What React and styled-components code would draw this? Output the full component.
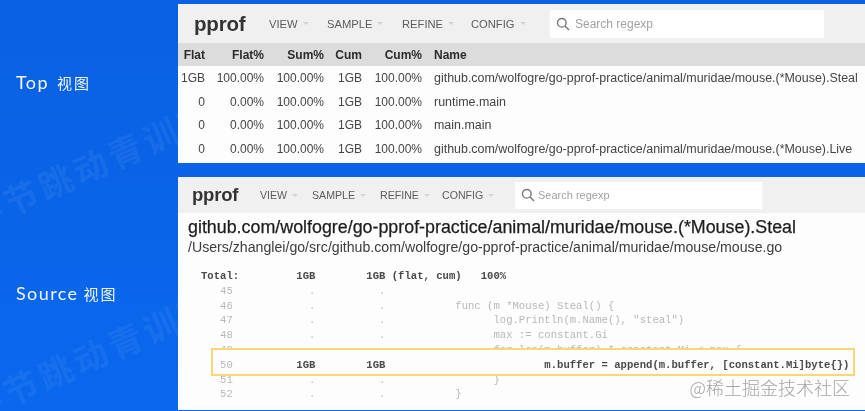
import React from "react";
import styled, { createGlobalStyle } from "styled-components";

const GlobalStyle = createGlobalStyle`
  html, body {
    margin: 0;
    padding: 0;
    background: #0a63e6;
  }
`;

const Page = styled.div`
  position: relative;
  width: 865px;
  height: 411px;
  overflow: hidden;
  display: grid;
  grid-template-columns: 178px 687px;
  background: linear-gradient(180deg, #0a60e2 0%, #0a68ee 100%);
  font-family: "Liberation Sans", Arial, sans-serif;
  filter: blur(0.35px);
`;

const Side = styled.div`
  display: flex;
  flex-direction: column;
  padding-left: 16px;
`;

const SideLabel = styled.div`
  font-family: "Lato", "Noto Sans CJK SC", sans-serif;
  font-size: 18px;
  letter-spacing: 1.4px;
  color: #f2f7ff;
  line-height: 22px;
  margin-top: ${({ $top }) => $top}px;
  span {
    font-family: "Noto Sans CJK SC", sans-serif;
    font-size: 15px;
    letter-spacing: 2px;
    margin-left: ${({ $gap }) => $gap}px;
  }
`;

const Main = styled.div`
  position: relative;
  display: flex;
  flex-direction: column;
  padding-top: 4px;
  gap: 14px;
`;

const Panel = styled.div`
  background: #fdfdfd;
  height: ${({ $height }) => $height}px;
`;

const Nav = styled.div`
  display: flex;
  align-items: center;
  height: ${({ $height }) => $height}px;
  padding-left: ${({ $pad }) => $pad}px;
  background: #f0f0f0;
  color: #5c5c5c;
  font-size: ${({ $size }) => $size}px;
`;

const Logo = styled.div`
  font-size: ${({ $size }) => $size}px;
  font-weight: 700;
  color: #333;
  letter-spacing: -0.2px;
  width: ${({ $width }) => $width}px;
`;

const Menu = styled.div`
  display: flex;
  align-items: center;
  gap: 5px;
  width: ${({ $width }) => $width}px;
`;

const Caret = styled.i`
  width: 0;
  height: 0;
  border-left: 3.5px solid transparent;
  border-right: 3.5px solid transparent;
  border-top: 3.5px solid #d4d4d4;
`;

const Search = styled.div`
  display: flex;
  align-items: center;
  gap: ${({ $gap }) => $gap}px;
  width: ${({ $width }) => $width}px;
  height: ${({ $height }) => $height}px;
  padding-left: 6px;
  box-sizing: border-box;
  background: #fff;
  color: #a2a2a2;
  font-size: ${({ $size }) => $size}px;
  margin-left: ${({ $left }) => $left}px;
`;

const TableGrid = styled.div`
  display: grid;
  grid-template-columns: 27px 59px 60px 38px 60px 1fr;
  color: #444;
  font-size: 12px;
`;

const HeadCell = styled.div`
  height: 23px;
  line-height: 25px;
  background: #dcdcdc;
  color: #2b2b2b;
  font-weight: 700;
  text-align: ${({ $left }) => ($left ? "left" : "right")};
  padding-left: ${({ $left }) => ($left ? "12px" : "0")};
`;

const Cell = styled.div`
  height: 23.5px;
  line-height: 24.5px;
  text-align: ${({ $left }) => ($left ? "left" : "right")};
  padding-left: ${({ $left }) => ($left ? "12px" : "0")};
  font-size: ${({ $left }) => ($left ? "12.45px" : "12px")};
  white-space: nowrap;
`;

const Source = styled.div`
  padding: 3px 0 0 10px;
`;

const FuncTitle = styled.div`
  font-size: 17.85px;
  line-height: 22px;
  font-weight: 500;
  color: #1d1d1d;
  -webkit-text-stroke: 0.25px #1d1d1d;
`;

const FuncPath = styled.div`
  font-size: 14.15px;
  line-height: 18px;
  color: #3c3c3c;
`;

const Listing = styled.div`
  margin: 13px 0 0 13px;
  font-family: "Liberation Mono", "Courier New", monospace;
  font-size: 10.6px;
  line-height: 14.8px;
`;

const Line = styled.pre`
  position: ${({ $front }) => ($front ? "relative" : "static")};
  z-index: ${({ $front }) => ($front ? 2 : "auto")};
  margin: 0;
  font: inherit;
  height: 14.8px;
  white-space: pre;
  color: ${({ $strong }) => ($strong ? "#4a4a4a" : "#b8b8b8")};
  font-weight: ${({ $strong }) => ($strong ? 700 : 400)};
`;

const LineNo = styled.span`
  color: #b8b8b8;
  font-weight: 400;
`;

const Highlight = styled.div`
  position: absolute;
  z-index: 1;
  left: 211px;
  top: 348px;
  width: 644px;
  height: 28px;
  box-sizing: border-box;
  background: #fdfdfd;
  border: 2px solid #f6d877;
`;

const Credit = styled.div`
  position: absolute;
  z-index: 3;
  right: 15px;
  top: 375px;
  font-family: "Noto Sans CJK SC", sans-serif;
  font-size: 18px;
  font-weight: 300;
  line-height: 24px;
  color: #a4a4a4;
`;

const Wave = styled.div`
  position: absolute;
  left: -41px;
  top: ${({ $y }) => $y}px;
  font-family: "Noto Sans CJK SC", sans-serif;
  font-weight: 700;
  font-size: 34px;
  line-height: 46px;
  letter-spacing: 4px;
  color: rgba(255, 255, 255, 0.06);
  transform: rotate(-24deg);
  white-space: nowrap;
`;

const SearchIcon = () => (
  <svg width="14" height="14" viewBox="0 0 14 14" fill="none" stroke="#777" strokeWidth="1.4">
    <circle cx="5.8" cy="5.8" r="4.3" />
    <path d="M9 9l4 4" />
  </svg>
);

const rows = [
  ["1GB", "100.00%", "100.00%", "1GB", "100.00%", "github.com/wolfogre/go-pprof-practice/animal/muridae/mouse.(*Mouse).Steal"],
  ["0", "0.00%", "100.00%", "1GB", "100.00%", "runtime.main"],
  ["0", "0.00%", "100.00%", "1GB", "100.00%", "main.main"],
  ["0", "0.00%", "100.00%", "1GB", "100.00%", "github.com/wolfogre/go-pprof-practice/animal/muridae/mouse.(*Mouse).Live"],
];

const heads = ["Flat", "Flat%", "Sum%", "Cum", "Cum%", "Name"];

const listing = [
  { text: "Total:         1GB        1GB (flat, cum)   100%", strong: true },
  { no: "   45", text: "            .          ." },
  { no: "   46", text: "            .          .           func (m *Mouse) Steal() {" },
  { no: "   47", text: '            .          .                 log.Println(m.Name(), "steal")' },
  { no: "   48", text: "            .          .                 max := constant.Gi" },
  { no: "   49", text: "            .          .                 for len(m.buffer) * constant.Mi < max {" },
  { no: "   50", text: "          1GB        1GB                         m.buffer = append(m.buffer, [constant.Mi]byte{})", strong: true, front: true },
  { no: "   51", text: "            .          .                 }" },
  { no: "   52", text: "            .          .           }" },
];

const NavBar = ({ height, pad, size, logoSize, logoWidth, widths, searchLeft, searchWidth, searchHeight, searchSize, searchGap }) => (
  <Nav $height={height} $pad={pad} $size={size}>
    <Logo $size={logoSize} $width={logoWidth}>pprof</Logo>
    {["VIEW", "SAMPLE", "REFINE", "CONFIG"].map((m, i) => (
      <Menu key={m} $width={widths[i]}>
        {m}
        <Caret />
      </Menu>
    ))}
    <Search $left={searchLeft} $width={searchWidth} $height={searchHeight} $size={searchSize} $gap={searchGap}>
      <SearchIcon />
      Search regexp
    </Search>
  </Nav>
);

export default function App() {
  return (
    <Page>
      <GlobalStyle />
      <Wave $y={142}>字节跳动青训营</Wave>
      <Wave $y={332}>字节跳动青训营</Wave>
      <Side>
        <SideLabel $top={71} $gap={8}>Top<span>视图</span></SideLabel>
        <SideLabel $top={188} $gap={5}>Source<span>视图</span></SideLabel>
      </Side>
      <Main>
        <Panel $height={159}>
          <NavBar height={39} pad={16} size={11.2} logoSize={20.5} logoWidth={75} widths={[58, 75, 69, 0]} searchLeft={79} searchWidth={274} searchHeight={28} searchSize={12} searchGap={5} />
          <TableGrid>
            {heads.map((h) => (
              <HeadCell key={h} $left={h === "Name"}>{h}</HeadCell>
            ))}
            {rows.map((row) =>
              row.map((c, i) => (
                <Cell key={i + row[5] + row[0]} $left={i === 5}>{c}</Cell>
              ))
            )}
          </TableGrid>
        </Panel>
        <Panel $height={233}>
          <NavBar height={36} pad={14} size={10.6} logoSize={18.5} logoWidth={68} widths={[52, 68, 62, 0]} searchLeft={73} searchWidth={247} searchHeight={27} searchSize={11} searchGap={3} />
          <Source>
            <FuncTitle>github.com/wolfogre/go-pprof-practice/animal/muridae/mouse.(*Mouse).Steal</FuncTitle>
            <FuncPath>/Users/zhanglei/go/src/github.com/wolfogre/go-pprof-practice/animal/muridae/mouse/mouse.go</FuncPath>
            <Listing>
              {listing.map((l) => (
                <Line key={l.text + l.no} $strong={l.strong} $front={l.front}>
                  {l.no && <LineNo>{l.no}</LineNo>}
                  {l.text}
                </Line>
              ))}
            </Listing>
          </Source>
        </Panel>
      </Main>
      <Highlight />
      <Credit>@稀土掘金技术社区</Credit>
    </Page>
  );
}
